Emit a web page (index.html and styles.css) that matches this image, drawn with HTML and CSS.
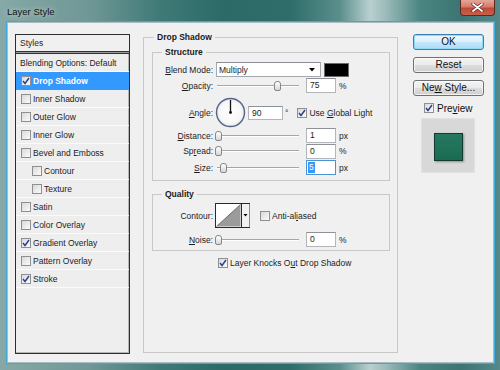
FILE: index.html
```html
<!DOCTYPE html>
<html>
<head>
<meta charset="utf-8">
<link rel="stylesheet" href="styles.css">
</head>
<body>
<div class="win">
  <div class="titlebar">
    <span class="title">Layer Style</span>
    <div class="close">
      <svg width="13" height="9" viewBox="0 0 13 9"><path d="M2 1 L11 8 M11 1 L2 8" stroke="#5a241c" stroke-width="3.2" stroke-linecap="round"/><path d="M2 1 L11 8 M11 1 L2 8" stroke="#fff" stroke-width="1.8" stroke-linecap="round"/></svg>
    </div>
  </div>
  <div class="client">
    <div class="list">
      <div class="head">Styles</div>
      <div class="band"></div>
      <div class="item plain">Blending Options: Default</div>
      <div class="item sel"><span class="cb"><svg width="8" height="8" viewBox="0 0 8 8"><path d="M1 4 L3 6.5 L7 1" fill="none" stroke="#2b3c92" stroke-width="1.4"/></svg></span>Drop Shadow</div>
      <div class="item"><span class="cb"></span>Inner Shadow</div>
      <div class="item"><span class="cb"></span>Outer Glow</div>
      <div class="item"><span class="cb"></span>Inner Glow</div>
      <div class="item"><span class="cb"></span>Bevel and Emboss</div>
      <div class="item sub"><span class="cb"></span>Contour</div>
      <div class="item sub"><span class="cb"></span>Texture</div>
      <div class="item"><span class="cb"></span>Satin</div>
      <div class="item"><span class="cb"></span>Color Overlay</div>
      <div class="item"><span class="cb"><svg width="8" height="8" viewBox="0 0 8 8"><path d="M1 4 L3 6.5 L7 1" fill="none" stroke="#2b3c92" stroke-width="1.4"/></svg></span>Gradient Overlay</div>
      <div class="item"><span class="cb"></span>Pattern Overlay</div>
      <div class="item"><span class="cb"><svg width="8" height="8" viewBox="0 0 8 8"><path d="M1 4 L3 6.5 L7 1" fill="none" stroke="#2b3c92" stroke-width="1.4"/></svg></span>Stroke</div>
    </div>

    <fieldset class="grp main">
      <legend>Drop Shadow</legend>
      <fieldset class="grp sub-grp structure">
        <legend>Structure</legend>
        <div class="row r-blend">
          <span class="lbl"><u>B</u>lend Mode:</span>
          <div class="select"><span>Multiply</span><svg width="6" height="4" viewBox="0 0 6 4"><path d="M0 0 H6 L3 3.5 Z" fill="#000"/></svg></div>
          <span class="color"></span>
        </div>
        <div class="row r-op">
          <span class="lbl"><u>O</u>pacity:</span>
          <div class="slider"><span class="thumb" style="left:59px"></span></div>
          <span class="num">75</span>
          <span class="unit">%</span>
        </div>
        <div class="row r-angle">
          <span class="lbl"><u>A</u>ngle:</span>
          <svg class="dial" width="31" height="31" viewBox="0 0 31 31">
            <defs><radialGradient id="dg" cx="50%" cy="50%" r="50%"><stop offset="0" stop-color="#ffffff"/><stop offset="0.8" stop-color="#f7f7f7"/><stop offset="1" stop-color="#dfe3ea"/></radialGradient></defs>
            <circle cx="15.5" cy="15.5" r="14" fill="url(#dg)" stroke="#56648a" stroke-width="1.4"/>
            <path d="M15.5 15.5 V3" stroke="#111" stroke-width="1.3"/>
            <circle cx="15.5" cy="15.5" r="1.4" fill="#111"/>
          </svg>
          <span class="num wide">90</span>
          <span class="deg">°</span>
          <span class="cb gl"><svg width="8" height="8" viewBox="0 0 8 8"><path d="M1 4 L3 6.5 L7 1" fill="none" stroke="#2b3c92" stroke-width="1.4"/></svg></span>
          <span class="cbl">Use <u>G</u>lobal Light</span>
        </div>
        <div class="row r-dist">
          <span class="lbl"><u>D</u>istance:</span>
          <div class="slider"><span class="thumb" style="left:0px"></span></div>
          <span class="num">1</span>
          <span class="unit">px</span>
        </div>
        <div class="row r-spread">
          <span class="lbl">Sp<u>r</u>ead:</span>
          <div class="slider"><span class="thumb" style="left:0px"></span></div>
          <span class="num">0</span>
          <span class="unit">%</span>
        </div>
        <div class="row r-size">
          <span class="lbl"><u>S</u>ize:</span>
          <div class="slider"><span class="thumb" style="left:5px"></span></div>
          <span class="num focus"><span class="selt">5</span></span>
          <span class="unit">px</span>
        </div>
      </fieldset>

      <fieldset class="grp sub-grp quality">
        <legend>Quality</legend>
        <div class="row r-contour">
          <span class="lbl">Contour:</span>
          <svg class="contour" width="35" height="25" viewBox="0 0 35 25">
            <rect x="0.5" y="0.5" width="34" height="24" fill="#fff" stroke="#2a2a2a"/>
            <rect x="1" y="1" width="25" height="23" fill="#fff"/>
            <path d="M1.5 23.5 L25.5 1.5 V23.5 Z" fill="#9b9b9b"/>
            <path d="M1.5 23.5 L25.5 1.5" stroke="#555" stroke-width="0.8"/>
            <rect x="26.5" y="1" width="8" height="23" fill="#f2f2f2"/>
            <path d="M26.5 0.5 V24.5" stroke="#2a2a2a"/>
            <path d="M28.5 11 H32.5 L30.5 13.5 Z" fill="#000"/>
          </svg>
          <span class="cb aa"></span>
          <span class="cbl">Anti-al<u>i</u>ased</span>
        </div>
        <div class="row r-noise">
          <span class="lbl"><u>N</u>oise:</span>
          <div class="slider"><span class="thumb" style="left:0px"></span></div>
          <span class="num">0</span>
          <span class="unit">%</span>
        </div>
      </fieldset>

      <div class="knock">
        <span class="cb"><svg width="8" height="8" viewBox="0 0 8 8"><path d="M1 4 L3 6.5 L7 1" fill="none" stroke="#2b3c92" stroke-width="1.4"/></svg></span>
        <span class="cbl">Layer Knocks O<u>u</u>t Drop Shadow</span>
      </div>
    </fieldset>

    <div class="side">
      <div class="btn def">OK</div>
      <div class="btn">Reset</div>
      <div class="btn">Ne<u>w</u> Style...</div>
      <div class="pv">
        <span class="cb"><svg width="8" height="8" viewBox="0 0 8 8"><path d="M1 4 L3 6.5 L7 1" fill="none" stroke="#2b3c92" stroke-width="1.4"/></svg></span>
        <span class="pvl">Pre<u>v</u>iew</span>
      </div>
      <div class="pbox"><div class="gsq"></div></div>
    </div>
  </div>
</div>
</body>
</html>
```

FILE: styles.css
```css
* { box-sizing: border-box; }

body {
  margin: 0;
  width: 500px;
  height: 370px;
  overflow: hidden;
  font-family: "Liberation Sans", Arial, sans-serif;
}

.win {
  width: 500px;
  height: 370px;
  display: flex;
  flex-direction: column;
  background:
    linear-gradient(90deg, #86a9a7 0%, #6f9795 18%, #3f7a77 32%, #2b6a67 45%, #2e6d6a 58%, #5b8f8c 68%, #b9d0cf 74%, #9dbcbb 77%, #4b8582 84%, #3c7572 92%, #56898a 100%);
}

.titlebar {
  height: 22px;
  flex: none;
  display: flex;
  justify-content: space-between;
  align-items: flex-start;
}

.title {
  margin: 6px 0 0 7px;
  font-size: 9.5px;
  line-height: 11px;
  color: #111;
  text-shadow: 0 0 5px rgba(255, 255, 255, 0.7);
}

.close {
  width: 35px;
  height: 16px;
  margin-right: 5px;
  border: 1px solid #5b2a22;
  border-top: none;
  border-radius: 0 0 4px 4px;
  background: linear-gradient(#e4a798 0%, #d77b6a 45%, #c04a36 55%, #c9604a 100%);
  display: flex;
  align-items: center;
  justify-content: center;
}

.client {
  flex: 1;
  margin: 0 6px 7px 7px;
  background: #f0f0f0;
  border: 1px solid #a9bcc6;
  box-shadow: 0 0 0 1px #3fa8d8;
  display: flex;
  align-items: flex-start;
  padding: 9px 0 0 7px;
  font-size: 8.5px;
  color: #1c1c1c;
}

/* ---------- style list ---------- */
.list {
  width: 115px;
  height: 320px;
  margin-top: 2px;
  flex: none;
  border: 1px solid #2e2e2e;
  background: #eeeeee;
  box-shadow: inset -1px -1px 0 #b5b5b5;
}

.head {
  height: 16px;
  line-height: 16px;
  padding-left: 4px;
  background: #f0f0f0;
}

.band {
  height: 3px;
  border-top: 1px solid #333;
  border-bottom: 1px solid #333;
  background: #9c9c9c;
}

.item {
  height: 18px;
  border-bottom: 1px solid #fafafa;
  display: flex;
  align-items: center;
  padding-left: 5px;
  white-space: nowrap;
}

.item.plain { padding-left: 4px; }
.item.sub { padding-left: 16px; }

.item.sel {
  background: #3399ff;
  border-bottom-color: #3399ff;
  color: #fff;
  font-weight: bold;
}

.item .cb { margin-right: 2px; }

.cb {
  width: 10px;
  height: 10px;
  flex: none;
  border: 1px solid #8f8f8f;
  background: linear-gradient(135deg, #d9d9d9, #fbfbfb);
  display: inline-flex;
  align-items: center;
  justify-content: center;
}

/* ---------- group boxes ---------- */
fieldset.grp {
  margin: 0;
  padding: 0;
  min-width: 0;
  border: 1px solid #c8c8c8;
}

fieldset.grp > legend {
  font-weight: bold;
  padding: 0 3px;
  margin-left: 10px;
  line-height: 10px;
  color: #1a1a1a;
}

fieldset.main {
  margin-left: 13px;
  width: 255px;
  height: 321px;
  flex: none;
}

fieldset.sub-grp {
  width: 238px;
}

fieldset.sub-grp > legend {
  margin-left: 9px;
}

fieldset.structure {
  margin: 5px 0 0 8px;
  padding: 5px 0 4px 0;
}

fieldset.quality {
  margin: 8px 0 0 8px;
  padding: 4px 0 3px 0;
}

.row {
  display: flex;
  align-items: center;
  height: 15px;
  white-space: nowrap;
}

.r-op { margin-top: 1px; }
.r-angle { margin-top: 4px; height: 31px; }
.r-dist { margin-top: 0; }
.r-spread { height: 16px; }
.r-size { height: 17px; }
.r-contour { height: 25px; }
.r-noise { margin-top: 4px; }

.lbl {
  width: 60px;
  flex: none;
  text-align: right;
}

.select {
  margin-left: 3px;
  width: 105px;
  height: 15px;
  border: 1px solid #a5a8ad;
  border-top-color: #8b8e94;
  background: #fff;
  display: flex;
  align-items: center;
  justify-content: space-between;
  padding: 0 5px 0 2px;
}

.color {
  margin-left: 3px;
  width: 25px;
  height: 14px;
  background: #000;
  border: 1px solid #6a6a6a;
}

.slider {
  position: relative;
  margin-left: 2px;
  width: 84px;
  height: 12px;
  flex: none;
}

.slider::before {
  content: "";
  position: absolute;
  left: 2px;
  right: 0;
  top: 5px;
  height: 1px;
  background: #a6a6a6;
  box-shadow: 0 1px 0 #ffffff;
}

.thumb {
  position: absolute;
  top: 1px;
  width: 7px;
  height: 10px;
  border: 1px solid #878787;
  border-radius: 3px 3px 2px 2px;
  background: linear-gradient(#ffffff, #d6d6d6);
}

.num {
  margin-left: 7px;
  width: 30px;
  height: 15px;
  border: 1px solid #b2b5ba;
  border-top-color: #8e9197;
  background: #fff;
  padding-left: 3px;
  line-height: 13px;
  flex: none;
}

.num.wide {
  margin-left: 2px;
  width: 35px;
  height: 14px;
  line-height: 12px;
}

.num.focus {
  border-color: #4d93d1;
  padding-left: 1px;
  display: flex;
  align-items: center;
}

.selt {
  background: #3399ff;
  color: #fff;
  padding: 0 1px;
  line-height: 11px;
}

.unit { margin-left: 3px; }

.dial { margin-left: 2px; flex: none; }

.deg { margin-left: 2px; }

.gl { margin-left: 9px; }

.cbl { margin-left: 2px; }

.contour { margin-left: 2px; flex: none; }

.aa { margin-left: 10px; }

.knock {
  margin: 6px 0 0 74px;
  display: flex;
  align-items: center;
  height: 11px;
  white-space: nowrap;
}

/* ---------- right column ---------- */
.side {
  margin: 2px 0 0 15px;
  width: 71px;
  flex: none;
  display: flex;
  flex-direction: column;
  font-size: 10px;
  color: #111;
}

.btn {
  height: 16px;
  margin-bottom: 7px;
  border: 1px solid #707070;
  border-radius: 3px;
  background: linear-gradient(#f3f3f3 0%, #ebebeb 48%, #dddddd 52%, #cfcfcf 100%);
  text-align: center;
  line-height: 14px;
  box-shadow: inset 0 0 0 1px rgba(255, 255, 255, 0.7);
}

.btn.def {
  border-color: #3c7fb1;
  background: linear-gradient(#ecf7fd 0%, #dcf1fc 48%, #c3e7fc 52%, #addcf6 100%);
  box-shadow: inset 0 0 0 1px #8fd8f6;
}

.pv {
  display: flex;
  align-items: center;
  height: 10px;
  margin-left: 11px;
}

.pvl { margin-left: 3px; }

.pbox {
  margin: 5px 0 0 8px;
  width: 54px;
  height: 55px;
  background: #d8d8d8;
  border: 1px solid #e2e2e2;
  display: flex;
  align-items: center;
  justify-content: center;
  padding: 2px 0 0 1px;
}

.gsq {
  width: 29px;
  height: 28px;
  border: 1px solid #163a30;
  background: linear-gradient(#25795f, #1b6b53);
  box-shadow: 1px 1px 2px rgba(0, 0, 0, 0.35);
}
```
